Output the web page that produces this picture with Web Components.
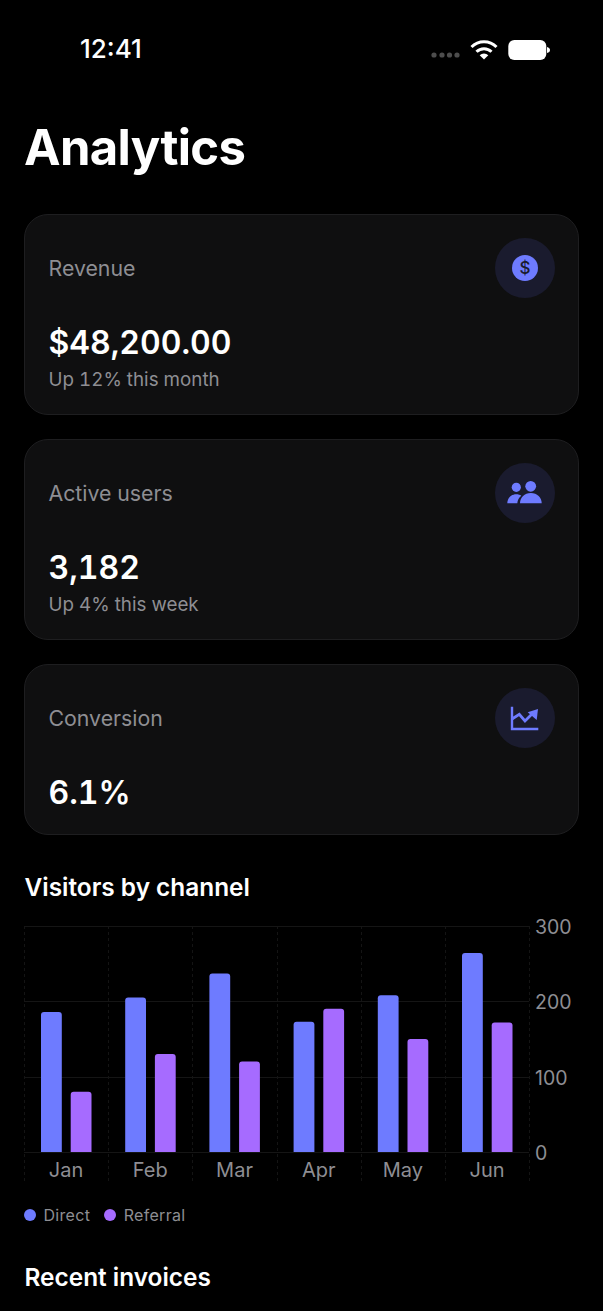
<!DOCTYPE html>
<html>
<head>
<meta charset="utf-8">
<title>Analytics</title>
<style>
  html, body { margin: 0; background: #000; height: 1311px; overflow: hidden; }
  body { font-family: Inter, "Liberation Sans", sans-serif; color: #fff; }
  main { display: block; padding: 0 24px; }
  stat-card { margin-bottom: 24px; }
  stat-card.last { margin-bottom: 34px; }
</style>
</head>
<body>
<status-bar></status-bar>
<main>
  <page-title>Analytics</page-title>
  <stat-card label="Revenue" value="$48,200.00" note="Up 12% this month">
    <svg slot="icon" width="28" height="28" viewBox="0 0 28 28"><circle cx="14" cy="14" r="13" fill="#6e7bff"/><text x="14" y="20" text-anchor="middle" font-family="Inter, sans-serif" font-size="17" font-weight="500" fill="#1a1b2e">$</text></svg>
  </stat-card>
  <stat-card label="Active users" value="3,182" note="Up 4% this week">
    <svg slot="icon" width="36" height="26" viewBox="0 0 36 26" fill="#6e7bff"><circle cx="9.300" cy="7.300" r="4.600"/><circle cx="23.700" cy="6.300" r="5.400"/><path d="M.3 23.300c0-5 3.700-9 9-9 2 0 3.700.5 5 1.500-2.400 1.700-3.700 4.300-4 7.500z"/><path d="M13 23.300c0-6 4.500-10.300 10.800-10.300s10.900 4.300 10.900 10.300z"/></svg>
  </stat-card>
  <stat-card class="last" label="Conversion" value="6.1%">
    <svg slot="icon" width="30" height="26" viewBox="0 0 30 26"><path d="M2 1.700V24h26.300" fill="none" stroke="#6e7bff" stroke-width="2.400"/><path d="M2 14l7.300-4.700 5.700 6.700 7-7" fill="none" stroke="#6e7bff" stroke-width="2.800"/><path d="M17.700 7.300L28 4 26.700 15z" fill="#6e7bff"/></svg>
  </stat-card>
  <section-title>Visitors by channel</section-title>
  <bar-chart></bar-chart>
  <chart-legend></chart-legend>
  <section-title class="recent">Recent invoices</section-title>
</main>
<script>
class StatusBar extends HTMLElement {
  connectedCallback() {
    this.attachShadow({ mode: "open" });
    this.shadowRoot.innerHTML = `
      <style>
        :host { display: flex; align-items: center; justify-content: space-between; height: 98px; box-sizing: border-box; padding: 0 52px 0 80px; }
        .time { font-size: 26px; font-weight: 500; line-height: 98px; }
        .right { display: flex; align-items: center; gap: 10px; }
        svg { display: block; }
      </style>
      <span class="time">12:41</span>
      <div class="right">
        <svg width="29" height="6" viewBox="0 0 29 6" fill="#4d4d4d" style="margin-top:12px"><circle cx="3" cy="3" r="2.600"/><circle cx="11" cy="3" r="2.600"/><circle cx="18.500" cy="3" r="2.600"/><circle cx="26" cy="3" r="2.600"/></svg>
        <svg width="28" height="21" viewBox="0 0 28 21"><path d="M1.500 8a17.500 17.500 0 0 1 25 0" fill="none" stroke="#fff" stroke-width="3"/><path d="M6.500 12.800a10.500 10.500 0 0 1 15 0" fill="none" stroke="#fff" stroke-width="3"/><path d="M14 20.500l-4.300-4.300a6.200 6.200 0 0 1 8.600 0z" fill="#fff"/></svg>
        <svg width="43" height="21" viewBox="0 0 43 21"><rect x="0.300" y="1" width="38" height="20" rx="6" fill="#fff"/><path d="M39 8c2 .5 3 1.500 3 3s-1 2.500-3 3z" fill="#fff"/></svg>
      </div>`;
  }
}

class PageTitle extends HTMLElement {
  connectedCallback() {
    this.attachShadow({ mode: "open" });
    this.shadowRoot.innerHTML = `
      <style>
        :host { display: block; font-size: 49px; font-weight: 700; line-height: 60px; margin: 20px 0 36px; letter-spacing: -0.65px; }
      </style>
      <slot></slot>`;
  }
}

class SectionTitle extends HTMLElement {
  connectedCallback() {
    this.attachShadow({ mode: "open" });
    this.shadowRoot.innerHTML = `
      <style>
        :host { display: block; font-size: 24.400px; font-weight: 600; line-height: 36px; margin-left: 0.500px; }
        :host(.recent) { margin-top: 32px; }
      </style>
      <slot></slot>`;
  }
}

class StatCard extends HTMLElement {
  connectedCallback() {
    const note = this.getAttribute("note");
    this.attachShadow({ mode: "open" });
    this.shadowRoot.innerHTML = `
      <style>
        :host { display: block; box-sizing: border-box; background: #0f0f10; border: 1px solid #1e1e20; border-radius: 24px; padding: 23px 23px 23px 23.500px; font-variant-numeric: tabular-nums; }
        .top { display: flex; align-items: center; justify-content: space-between; height: 60px; }
        .label { font-size: 21.300px; color: #8e8e93; }
        .icon { width: 60px; height: 60px; border-radius: 50%; background: #1a1b2e; display: flex; align-items: center; justify-content: center; }
        .value { font-size: 32px; font-weight: 600; line-height: 37px; margin-top: 26px; }
        .note { font-size: 18.800px; color: #8e8e93; line-height: 22px; margin-top: 8px; }
      </style>
      <div class="top">
        <span class="label">${this.getAttribute("label")}</span>
        <div class="icon"><slot name="icon"></slot></div>
      </div>
      <div class="value">${this.getAttribute("value")}</div>
      ${note ? `<div class="note">${note}</div>` : ""}`;
  }
}

class BarChart extends HTMLElement {
  connectedCallback() {
    const data = [["Jan", 186, 80], ["Feb", 205, 130], ["Mar", 237, 120], ["Apr", 173, 190], ["May", 208, 150], ["Jun", 264, 172]];
    const step = 84.2, top = 9, base = 235, unit = 226 / 300;
    // bar with rounded top, square bottom
    const bar = (x, v, fill) => {
      const y = base - v * unit, w = 20.8, r = 3;
      return `<path d="M${x} ${base}V${y + r}q0-${r} ${r}-${r}h${w - 2 * r}q${r} 0 ${r} ${r}V${base}z" fill="${fill}"/>`;
    };
    let grid = "", bars = "", labels = "";
    for (let i = 0; i <= 6; i++) {
      const x = 0.5 + Math.round(i * step);
      grid += `<line x1="${x}" x2="${x}" y1="${top}" y2="264" stroke="#141414" stroke-dasharray="3 3"/>`;
    }
    [300, 200, 100, 0].forEach((v, i) => {
      const y = Math.round(top + i * 75.33) + 0.5;
      grid += `<line x1="0" x2="505" y1="${y}" y2="${y}" stroke="#151515"/>`;
      labels += `<text x="511" y="${y + 7}" font-size="19.500">${v}</text>`;
    });
    data.forEach(([name, a, b], i) => {
      const x = i * step;
      bars += bar(x + 17, a, "#6e7bff") + bar(x + 46.700, b, "#a66bff");
      labels += `<text x="${x + step / 2}" y="260" font-size="20" text-anchor="middle">${name}</text>`;
    });
    this.attachShadow({ mode: "open" });
    this.shadowRoot.innerHTML = `
      <style>
        :host { display: block; height: 286px; margin-top: 12px; }
        svg { display: block; overflow: visible; }
        text { font-family: Inter, "Liberation Sans", sans-serif; fill: #8e8e93; }
      </style>
      <svg width="555" height="272" viewBox="0 0 555 272">${grid}${bars}${labels}</svg>`;
  }
}

class ChartLegend extends HTMLElement {
  connectedCallback() {
    this.attachShadow({ mode: "open" });
    this.shadowRoot.innerHTML = `
      <style>
        :host { display: flex; gap: 14px; align-items: center; height: 24px; font-size: 16px; color: #8e8e93; letter-spacing: 0.300px; }
        span { display: flex; align-items: center; gap: 7.500px; }
        i { width: 12px; height: 12px; border-radius: 50%; }
      </style>
      <span><i style="background:#6e7bff"></i>Direct</span>
      <span><i style="background:#a66bff"></i>Referral</span>`;
  }
}

customElements.define("status-bar", StatusBar);
customElements.define("page-title", PageTitle);
customElements.define("section-title", SectionTitle);
customElements.define("stat-card", StatCard);
customElements.define("bar-chart", BarChart);
customElements.define("chart-legend", ChartLegend);
</script>
</body>
</html>
